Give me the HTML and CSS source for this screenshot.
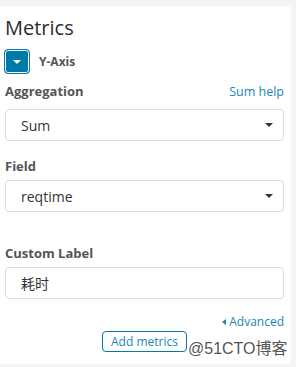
FILE: index.html
```html
<html>
<head>
<title>Metrics</title>
<link rel="stylesheet" href="styles.css">
</head>
<body>
<div class="panel">
  <h2 class="title">Metrics</h2>
  <div class="agg-head">
    <button class="toggle"><span class="caret-down"></span></button>
    <span class="agg-name">Y-Axis</span>
  </div>
  <div class="label-row first">
    <label>Aggregation</label>
    <a class="link" href="#">Sum help</a>
  </div>
  <div class="select s-agg">
    <span>Sum</span>
    <span class="caret"></span>
  </div>
  <div class="label-row field">
    <label>Field</label>
  </div>
  <div class="select s-field">
    <span>reqtime</span>
    <span class="caret"></span>
  </div>
  <div class="label-row custom">
    <label>Custom Label</label>
  </div>
  <div class="input">耗时</div>
  <div class="advanced">
    <a class="link" href="#"><span class="caret-left"></span>Advanced</a>
  </div>
  <div class="actions">
    <button class="add">Add metrics</button>
  </div>
</div>
<div class="watermark">@51CTO博客</div>
</body>
</html>
```

FILE: styles.css
```css
body {
    margin: 0;
    background-color: #f4f4f4;
    font-family: "Open Sans", "Noto Sans CJK SC", sans-serif;
    color: #333;
}
.panel {
    margin-top: 6px;
    width: 279px;
    padding: 10px 7px 12px 5px;
    background-color: #fff;
    border-radius: 0 4px 4px 0;
}
.title {
    margin: 0;
    font-size: 20px;
    line-height: 24px;
    font-weight: normal;
    color: #2d2d2d;
}
.agg-head {
    display: flex;
    align-items: center;
    margin-top: 9px;
    margin-left: -1px;
}
.toggle {
    width: 26px;
    height: 25px;
    padding: 0;
    border: 1px solid #0079a5;
    border-radius: 4px;
    background-color: #0079a5;
    box-shadow: inset 0 0 0 1px #fff;
    display: flex;
    align-items: center;
    justify-content: center;
}
.caret-down {
    width: 0;
    height: 0;
    border-left: 4px solid transparent;
    border-right: 4px solid transparent;
    border-top: 4px solid #fff;
}
.agg-name {
    margin-left: 9px;
    font-size: 12px;
    font-weight: bold;
    color: #555;
}
.label-row {
    display: flex;
    justify-content: space-between;
    align-items: baseline;
    line-height: 18px;
}
.label-row label {
    font-size: 13px;
    font-weight: bold;
    color: #555;
}
.label-row.first {
    margin-top: 8px;
}
.label-row.field {
    margin-top: 16px;
}
.label-row.custom {
    margin-top: 32px;
}
.link {
    color: #1a87b8;
    text-decoration: none;
    font-size: 12.5px;
}
.select, .input {
    height: 30px;
    border: 1px solid #ddd;
    border-radius: 4px;
    padding: 0 10px 0 15px;
    display: flex;
    align-items: center;
    justify-content: space-between;
    font-size: 14px;
    color: #333;
}
.s-agg {
    margin-top: 8px;
}
.s-field, .input {
    margin-top: 5px;
}
.caret {
    width: 0;
    height: 0;
    border-left: 4px solid transparent;
    border-right: 4px solid transparent;
    border-top: 4px solid #333;
}
.advanced {
    margin-top: 15px;
    text-align: right;
    line-height: 16px;
}
.advanced .link {
    font-size: 12px;
}
.caret-left {
    display: inline-block;
    width: 0;
    height: 0;
    border-top: 3.5px solid transparent;
    border-bottom: 3.5px solid transparent;
    border-right: 4px solid #1a87b8;
    margin-right: 3px;
    vertical-align: 1px;
}
.actions {
    margin-top: 1px;
    display: flex;
    justify-content: center;
}
.add {
    height: 21px;
    padding: 0 8px;
    border: 1px solid #0079a5;
    border-radius: 4px;
    background-color: #fff;
    color: #1a87b8;
    font-family: "Open Sans", sans-serif;
    font-size: 12px;
}
.watermark {
    position: absolute;
    left: 188px;
    top: 335px;
    font-family: "Liberation Sans", "Noto Sans CJK SC", sans-serif;
    font-size: 16px;
    color: #555;
    text-shadow: 0 0 2px #fff, 0 0 2px #fff;
}
```
